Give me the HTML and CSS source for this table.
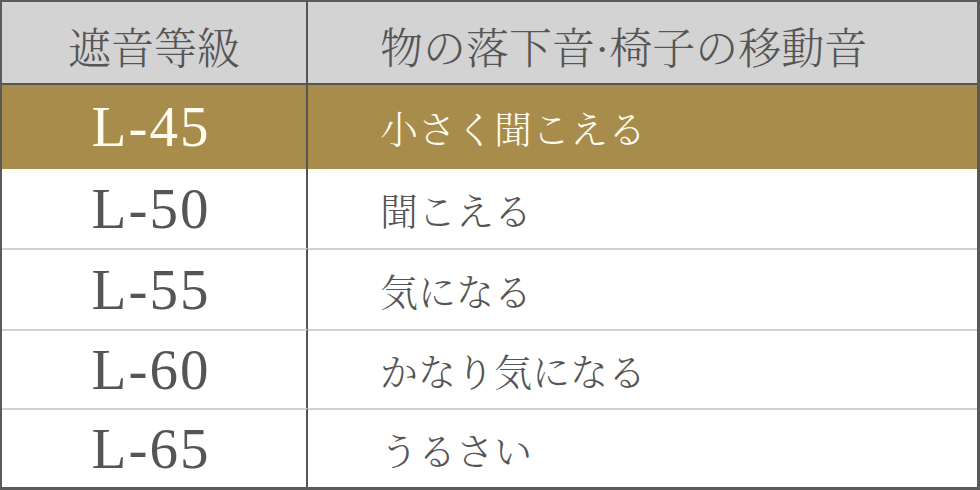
FILE: index.html
```html
<!DOCTYPE html>
<html lang="ja">
<head>
<meta charset="utf-8">
<link rel="stylesheet" href="styles.css">
</head>
<body>
<table class="grade-table">
  <thead>
    <tr class="head-row">
      <th class="col-level">遮音等級</th>
      <th class="col-desc">物の落下音·椅子の移動音</th>
    </tr>
  </thead>
  <tbody>
    <tr class="row row-hl">
      <td class="col-level">L-45</td>
      <td class="col-desc">小さく聞こえる</td>
    </tr>
    <tr class="row row-a">
      <td class="col-level">L-50</td>
      <td class="col-desc">聞こえる</td>
    </tr>
    <tr class="row row-b">
      <td class="col-level">L-55</td>
      <td class="col-desc">気になる</td>
    </tr>
    <tr class="row row-c">
      <td class="col-level">L-60</td>
      <td class="col-desc">かなり気になる</td>
    </tr>
    <tr class="row row-d">
      <td class="col-level">L-65</td>
      <td class="col-desc">うるさい</td>
    </tr>
  </tbody>
</table>
</body>
</html>
```
FILE: styles.css
```css
html, body {
  margin: 0;
  padding: 0;
  background: #ffffff;
}

.grade-table {
  box-sizing: border-box;
  width: 980px;
  height: 490px;
  border-collapse: separate;
  border-spacing: 0;
  border-style: solid;
  border-color: #5a5a5a;
  border-width: 2px 3px 3px 2px;
  font-family: "Liberation Serif", "Noto Serif CJK JP", "Noto Sans CJK JP", serif;
  color: #555555;
  table-layout: fixed;
}

.grade-table th,
.grade-table td {
  padding: 0;
  vertical-align: middle;
  box-sizing: border-box;
}

.col-level {
  width: 306px;
  text-align: center;
  border-right: 2px solid #555555;
}

.col-desc {
  text-align: left;
  padding-left: 72px !important;
}

.head-row th {
  height: 83px;
  background: #d3d3d3;
  border-bottom: 2px solid #555555;
  font-weight: 300;
  font-size: 43px;
  color: #555555;
  padding-top: 6px !important;
}

.row td.col-level {
  font-size: 57px;
  font-weight: 400;
  letter-spacing: 2px;
  padding-right: 6px !important;
}

.row td.col-desc {
  font-size: 38px;
  font-weight: 350;
}

.row-hl td {
  height: 83px;
  background: #a88c4c;
  color: #fffbee;
}

.row-a td {
  height: 79px;
}

.row-b td {
  height: 80px;
  border-top: 2px solid #d2d2d2;
}

.row-c td {
  height: 79px;
  border-top: 2px solid #d2d2d2;
}

.row-d td {
  height: 78px;
  border-top: 2px solid #d2d2d2;
}
```
